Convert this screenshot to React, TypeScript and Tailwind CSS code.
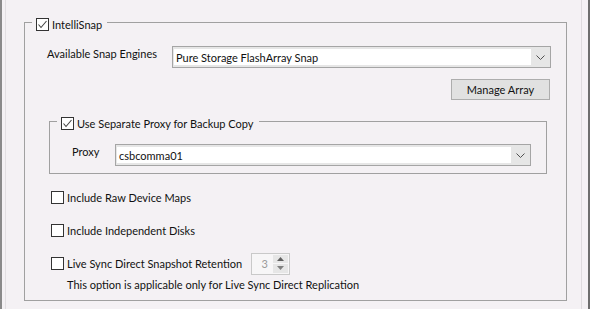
import React from 'react';

function Check({ checked }: { checked?: boolean }) {
  return (
    <span className="w-[13px] h-[13px] shrink-0 border border-[#333333] bg-white flex items-center justify-center">
      {checked && (
        <svg width="11" height="11" viewBox="0 0 11 11">
          <polyline points="1.5,5.5 4,8.5 9.5,2" fill="none" stroke="#444" strokeWidth="1.1" />
        </svg>
      )}
    </span>
  );
}

function Combo({ value, width }: { value: string; width: string }) {
  return (
    <div className={`${width} h-[22px] border border-[#a5a5a5] bg-[#e6e6e6] flex pt-[2px] pb-[2px] pl-[1px]`}>
      <div className="flex-1 bg-white flex items-center pl-[2px] leading-[15px]">{value}</div>
      <div className="w-[19px] flex items-center justify-center">
        <svg width="9" height="5" viewBox="0 0 9 5">
          <polyline points="0.5,0.5 4.5,4.5 8.5,0.5" fill="none" stroke="#505050" strokeWidth="1" />
        </svg>
      </div>
    </div>
  );
}

function GroupLegend({ label, checked }: { label: string; checked?: boolean }) {
  return (
    <legend className="ml-[7px] px-[4px] pt-[4px] h-[17px] flex items-center gap-[3px]">
      <Check checked={checked} />
      <span className="leading-[15px] pr-[1px]">{label}</span>
    </legend>
  );
}

function CheckRow({ label, children }: { label: string; children?: React.ReactNode }) {
  return (
    <div className="h-[13px] flex items-center pl-[26px]">
      <Check />
      <span className="ml-[3px] leading-[15px] w-[184px] whitespace-nowrap">{label}</span>
      {children}
    </div>
  );
}

export default function App() {
  return (
    <div className="w-[590px] h-[309px] bg-[#f4f1f4] flex overflow-hidden font-[Lato,sans-serif] text-[11px] text-[#111]">
      {/* left window edge */}
      <div className="w-[2px] bg-[#8a8a8a]" />
      <div className="w-[3px]" />
      <div className="w-[1px] bg-[#e2dfe2]" />

      <div className="flex-1 pl-[18px] pr-[14px] pt-[14px]">
        <fieldset className="w-[543px] border border-[#a0a0a0] m-0 p-0 pb-[8px]">
          <GroupLegend label="IntelliSnap" checked />

          <div className="mt-[15px] pl-[22px] flex items-start">
            <span className="w-[125px] leading-[15px]">Available Snap Engines</span>
            <Combo value="Pure Storage FlashArray Snap" width="w-[379px]" />
          </div>

          <div className="mt-[11px] pr-[16px] flex justify-end">
            <button className="w-[99px] h-[21px] bg-[#e1e1e1] border border-[#adadad] flex items-center justify-center leading-[15px]">
              Manage Array
            </button>
          </div>

          <fieldset className="mt-[13px] ml-[24px] w-[498px] border border-[#a0a0a0] m-0 p-0 pb-[7px]">
            <GroupLegend label="Use Separate Proxy for Backup Copy" checked />
            <div className="mt-[14px] pl-[22px] flex items-start">
              <span className="w-[43px] leading-[15px]">Proxy</span>
              <Combo value="csbcomma01" width="w-[416px]" />
            </div>
          </fieldset>

          <div className="mt-[17px] flex flex-col gap-[20px]">
            <CheckRow label="Include Raw Device Maps" />
            <CheckRow label="Include Independent Disks" />
            <CheckRow label="Live Sync Direct Snapshot Retention">
              <div className="w-[39px] h-[22px] shrink-0 border border-[#c9c9c9] bg-[#f7f6f7] flex">
                <div className="flex-1 text-right pr-[5px] text-[#9a9a9a] leading-[20px]">3</div>
                <div className="w-[16px] flex flex-col gap-[1px] py-[1px] pr-[1px]">
                  <div className="flex-1 bg-[#e6e6e6] flex items-center justify-center">
                    <svg width="7" height="4" viewBox="0 0 7 4"><polygon points="0,4 3.5,0 7,4" fill="#606060" /></svg>
                  </div>
                  <div className="flex-1 bg-[#e6e6e6] flex items-center justify-center">
                    <svg width="7" height="4" viewBox="0 0 7 4"><polygon points="0,0 3.5,4 7,0" fill="#808080" /></svg>
                  </div>
                </div>
              </div>
            </CheckRow>
          </div>

          <p className="mt-[7px] pl-[42px] leading-[15px] whitespace-nowrap">
            This option is applicable only for Live Sync Direct Replication
          </p>
        </fieldset>
      </div>

      {/* right window edge */}
      <div className="w-[1px] bg-[#dedbde]" />
      <div className="w-[6px]" />
      <div className="w-[2px] bg-[#6e6e6e]" />
    </div>
  );
}
